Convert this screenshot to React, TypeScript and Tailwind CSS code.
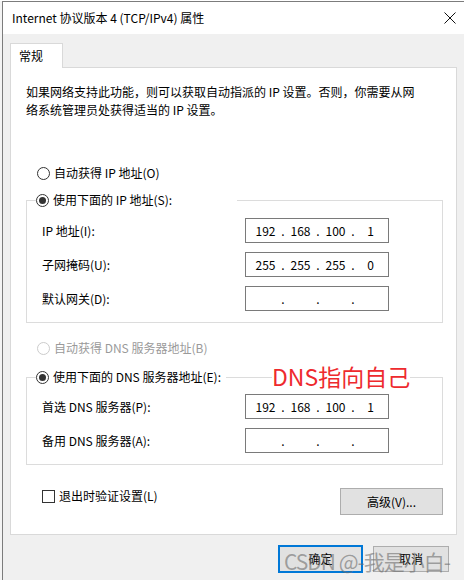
import { Fragment } from "react";

function Radio({ checked, disabled }: { checked?: boolean; disabled?: boolean }) {
  return (
    <span
      className={`flex h-[13px] w-[13px] shrink-0 items-center justify-center rounded-full border bg-white ${
        disabled ? "border-[#cccccc]" : "border-[#333333]"
      }`}
    >
      {checked && <span className="h-[7px] w-[7px] rounded-full bg-[#333333]" />}
    </span>
  );
}

function IpBox({ octets }: { octets?: string[] }) {
  const v = octets ?? ["", "", "", ""];
  return (
    <div className="flex h-[25px] w-[144px] items-center border border-[#7a7a7a] bg-white pl-[4px] leading-[14px]">
      {v.map((o, i) => (
        <Fragment key={i}>
          <span className="w-[31px] text-center">{o}</span>
          {i < 3 && <span className="w-[4px] text-center">.</span>}
        </Fragment>
      ))}
    </div>
  );
}

function Row({ label, octets }: { label: string; octets?: string[] }) {
  return (
    <div className="flex items-center pl-[15px]">
      <span className="w-[203px] leading-[14px]">{label}</span>
      <IpBox octets={octets} />
    </div>
  );
}

export default function App() {
  return (
    <div className="relative flex h-[580px] w-[464px] overflow-hidden bg-white pt-[1px] font-['Noto_Sans_CJK_SC',sans-serif] text-[12px] text-black">
      {/* window behind */}
      <div className="w-[2px] bg-[#f4f4f4]" />

      <div className="flex flex-1 flex-col border-l border-t border-[#7c7c7c]">
        {/* title bar */}
        <div className="flex h-[32px] items-center justify-between bg-white pl-[9px] pr-[7px]">
          <span className="leading-[16px]">Internet 协议版本 4 (TCP/IPv4) 属性</span>
          <svg width="12" height="12" viewBox="0 0 12 12" className="mr-[1px]">
            <path d="M0.5 0.5 L11.5 11.5 M11.5 0.5 L0.5 11.5" stroke="#111" strokeWidth="1" fill="none" />
          </svg>
        </div>

        {/* body */}
        <div className="flex flex-1 flex-col bg-[#f0f0f0] pl-[7px] pt-[9px]">
          <div className="relative z-10 -mb-px flex h-[25px] w-[53px] items-center border-l border-r border-t border-[#d9d9d9] bg-white pl-[8px]">
            <span className="leading-[14px]">常规</span>
          </div>

          <div className="relative flex h-[468px] w-[447px] flex-col border border-[#d9d9d9] bg-white pl-[15px] pr-[13px] pt-[15px]">
            <p className="leading-[18px]">
              如果网络支持此功能，则可以获取自动指派的 IP 设置。否则，你需要从网
              <br />
              络系统管理员处获得适当的 IP 设置。
            </p>

            <div className="mt-[47px] flex h-[14px] items-center gap-[4px] pl-[11px]">
              <Radio />
              <span className="leading-[14px]">自动获得 IP 地址(O)</span>
            </div>

            <fieldset className="mt-[13px] flex flex-col gap-[9px] border border-[#dcdcdc] pb-[11px] pt-[11px]">
              <legend className="ml-[9px] flex h-[14px] w-[201px] items-center gap-[4px] bg-white">
                <Radio checked />
                <span className="leading-[14px]">使用下面的 IP 地址(S):</span>
              </legend>
              <Row label="IP 地址(I):" octets={["192", "168", "100", "1"]} />
              <Row label="子网掩码(U):" octets={["255", "255", "255", "0"]} />
              <Row label="默认网关(D):" />
            </fieldset>

            <div className="mt-[18px] flex h-[14px] items-center gap-[4px] pl-[11px] text-[#9a9a9a]">
              <Radio disabled />
              <span className="leading-[14px]">自动获得 DNS 服务器地址(B)</span>
            </div>

            <fieldset className="mt-[15px] flex flex-col gap-[9px] border border-[#dcdcdc] pb-[11px] pt-[10px]">
              <legend className="ml-[9px] flex h-[14px] w-[190px] items-center gap-[4px] bg-white">
                <Radio checked />
                <span className="leading-[14px]">使用下面的 DNS 服务器地址(E):</span>
              </legend>
              <Row label="首选 DNS 服务器(P):" octets={["192", "168", "100", "1"]} />
              <Row label="备用 DNS 服务器(A):" />
            </fieldset>

            <div className="mt-[23px] flex items-start justify-between">
              <div className="mt-[1px] flex items-center gap-[4px] pl-[16px]">
                <span className="h-[13px] w-[13px] border border-[#333333] bg-white" />
                <span className="leading-[14px]">退出时验证设置(L)</span>
              </div>
              <button className="flex h-[27px] w-[103px] items-center justify-center border border-[#adadad] bg-[#e1e1e1] leading-[14px]">
                高级(V)...
              </button>
            </div>

            {/* annotation */}
            <span className="absolute left-[261px] top-[296px] whitespace-nowrap bg-white text-[23px] leading-[24px] text-[#ee2a2e]">
              DNS指向自己
            </span>
          </div>

          <div className="mt-[10px] flex items-center gap-[10px] pl-[268px]">
            <button className="flex h-[28px] w-[85px] items-center justify-center border-2 border-[#0078d7] bg-[#e1e1e1] leading-[14px]">
              确定
            </button>
            <button className="flex h-[26px] w-[76px] items-center justify-center border border-[#adadad] bg-[#e1e1e1] leading-[14px]">
              取消
            </button>
          </div>
        </div>
      </div>

      {/* watermark */}
      <span className="pointer-events-none absolute left-[284px] top-[548px] whitespace-nowrap text-[21px] leading-[26px] tracking-[-1px] text-[rgba(110,110,110,0.6)]">
        CSDN @-我是小白-
      </span>
    </div>
  );
}
